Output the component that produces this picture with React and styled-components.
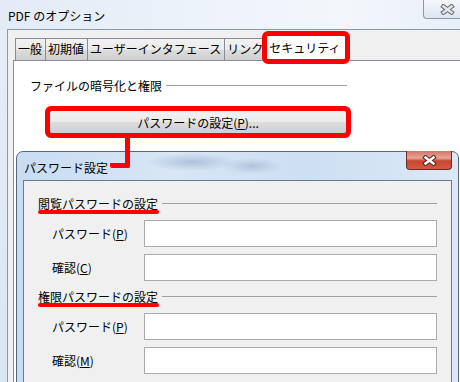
import React from 'react'
import styled, { createGlobalStyle } from 'styled-components'

const GlobalStyle = createGlobalStyle`
  html, body {
    margin: 0;
    padding: 0;
  }
  body {
    font-family: "Noto Sans CJK JP", "Noto Sans", sans-serif;
    font-size: 12px;
    color: #000;
  }
  * {
    box-sizing: border-box;
  }
`;

function CloseGlyph({ fill, edge }) {
    return (
        <svg width="15" height="11" viewBox="0 0 15 11">
            <path d="M3.5 2.5 L11.5 8.5 M11.5 2.5 L3.5 8.5" stroke={edge} strokeWidth="4.6" strokeLinecap="square" fill="none" />
            <path d="M3.5 2.5 L11.5 8.5 M11.5 2.5 L3.5 8.5" stroke={fill} strokeWidth="2.4" strokeLinecap="square" fill="none" />
        </svg>
    )
}

function App() {
    return (
        <>
            <GlobalStyle />
            <Screen>
                <TitleBar>
                    <Caption>PDF のオプション</Caption>
                    <FrameClose>
                        <CloseGlyph fill="#e4e6ea" edge="#6b6f76" />
                    </FrameClose>
                </TitleBar>
                <Client>
                    <TabBar>
                        <Tab>一般</Tab>
                        <Tab>初期値</Tab>
                        <Tab>ユーザーインタフェース</Tab>
                        <Tab>リンク</Tab>
                        <Tab $active>セキュリティ</Tab>
                    </TabBar>
                    <TabPage>
                        <PageBody>
                            <GroupHeader>
                                <GroupTitle>ファイルの暗号化と権限</GroupTitle>
                                <Rule />
                            </GroupHeader>
                            <PushButton>パスワードの設定(<u>P</u>)...</PushButton>
                        </PageBody>
                    </TabPage>
                </Client>

                <Dialog>
                    <DialogTitleBar>
                        <DialogCaption>パスワード設定</DialogCaption>
                        <DialogClose>
                            <CloseGlyph fill="#ffffff" edge="#5a2a24" />
                        </DialogClose>
                    </DialogTitleBar>
                    <DialogClient>
                        <Form>
                            <GroupHeader $spaced>
                                <GroupTitle $marked>閲覧パスワードの設定</GroupTitle>
                                <Rule />
                            </GroupHeader>
                            <Field>
                                <FieldLabel>パスワード(<u>P</u>)</FieldLabel>
                                <TextBox />
                            </Field>
                            <Field>
                                <FieldLabel>確認(<u>C</u>)</FieldLabel>
                                <TextBox />
                            </Field>
                            <GroupHeader $spaced>
                                <GroupTitle $marked>権限パスワードの設定</GroupTitle>
                                <Rule />
                            </GroupHeader>
                            <Field>
                                <FieldLabel>パスワード(<u>P</u>)</FieldLabel>
                                <TextBox />
                            </Field>
                            <Field>
                                <FieldLabel>確認(<u>M</u>)</FieldLabel>
                                <TextBox />
                            </Field>
                        </Form>
                    </DialogClient>
                </Dialog>

                <Connector />
            </Screen>
        </>
    )
}

const Screen = styled.div`
    position: relative;
    width: 460px;
    height: 382px;
    overflow: hidden;
    display: flex;
    flex-direction: column;
    background: linear-gradient(180deg, #e6eef8 0%, #dbe6f3 100%);
`;

const TitleBar = styled.div`
    height: 29px;
    flex: none;
    display: flex;
    justify-content: space-between;
    padding-left: 8px;
    background: linear-gradient(90deg, #e2ebf6 0%, #edf3fa 45%, #f3f7fc 75%, #e7eff8 100%);
`;

const Caption = styled.div`
    align-self: center;
    font-size: 12px;
    line-height: 17px;
    padding-top: 1px;
`;

const FrameClose = styled.div`
    width: 48px;
    height: 19px;
    margin-right: -11px;
    display: flex;
    align-items: center;
    justify-content: center;
    border: 1px solid #8a98aa;
    border-top: none;
    border-radius: 0 0 4px 4px;
    background: linear-gradient(180deg, #f4f8fc 0%, #e8eef6 50%, #dde6f1 100%);
`;

const Client = styled.div`
    flex: 1;
    display: flex;
    flex-direction: column;
    margin-left: 7px;
    padding: 8px 0 0 5px;
    background: #f0f0f0;
    border-left: 1px solid #8c98a8;
    border-top: 1px solid #8c98a8;
`;

const TabBar = styled.div`
    height: 22px;
    flex: none;
    display: flex;
    align-items: flex-end;
    padding-left: 2px;
    position: relative;
    z-index: 1;
`;

const Tab = styled.div`
    position: relative;
    height: ${p => (p.$active ? '26px' : '22px')};
    margin: ${p => (p.$active ? '0 -2px -1px -2px' : '0 -1px 0 0')};
    padding: ${p => (p.$active ? '0 4px' : '0 3px 0 2px')};
    border: 1px solid #898c95;
    border-bottom: none;
    line-height: ${p => (p.$active ? '24px' : '20px')};
    white-space: nowrap;
    background: ${p => (p.$active
        ? '#ffffff'
        : 'linear-gradient(180deg, #f2f2f2 0%, #ebebeb 50%, #dddddd 50%, #cfcfcf 100%)')};
    z-index: ${p => (p.$active ? 2 : 0)};

    ${p => p.$active && `
        &::after {
            content: '';
            position: absolute;
            left: -3px;
            right: -5px;
            top: -5px;
            bottom: -3px;
            border: 5px solid #ff0000;
            border-radius: 6px;
        }
    `}
`;

const TabPage = styled.div`
    flex: 1;
    background: #ffffff;
    border: 1px solid #898c95;
    border-right: none;
    border-bottom: none;
`;

const PageBody = styled.div`
    width: 333px;
    padding: 16px 0 0 16px;
    display: flex;
    flex-direction: column;
`;

const GroupHeader = styled.div`
    height: 17px;
    display: flex;
    align-items: center;
    gap: 4px;
    margin-bottom: ${p => (p.$spaced ? '1px' : '0')};
`;

const GroupTitle = styled.span`
    position: relative;
    line-height: 17px;
    white-space: nowrap;

    ${p => p.$marked && `
        &::after {
            content: '';
            position: absolute;
            left: 0;
            right: -1px;
            bottom: -2px;
            height: 4px;
            border-radius: 2px;
            background: #ff0000;
        }
    `}
`;

const Rule = styled.div`
    flex: 1;
    height: 1px;
    background: #a0a0a0;
`;

const PushButton = styled.div`
    position: relative;
    width: 298px;
    height: 24px;
    margin: 16px 0 0 19px;
    display: flex;
    align-items: center;
    justify-content: center;
    border: 1px solid #707070;
    border-radius: 3px;
    background: linear-gradient(180deg, #f2f2f2 0%, #ebebeb 50%, #dddddd 50%, #cfcfcf 100%);

    &::after {
        content: '';
        position: absolute;
        left: -5px;
        right: -5px;
        top: -5px;
        bottom: -5px;
        border: 5px solid #ff0000;
        border-radius: 6px;
    }
`;

const Dialog = styled.div`
    position: absolute;
    left: 16px;
    top: 151px;
    width: 443px;
    height: 250px;
    display: flex;
    flex-direction: column;
    padding: 0 6px;
    border: 1px solid #56677d;
    border-radius: 7px 7px 0 0;
    background:
        radial-gradient(ellipse 45px 9px at 175px 10px, rgba(96, 128, 168, 0.35), transparent),
        radial-gradient(ellipse 30px 8px at 235px 14px, rgba(96, 128, 168, 0.3), transparent),
        linear-gradient(90deg, #c9dcf1 0%, #d8e6f5 35%, #cddff2 65%, #dbe8f6 100%);
    z-index: 3;
`;

const DialogTitleBar = styled.div`
    height: 28px;
    flex: none;
    display: flex;
    justify-content: space-between;
`;

const DialogCaption = styled.div`
    align-self: center;
    padding-left: 1px;
    line-height: 17px;
    padding-top: 2px;
`;

const DialogClose = styled.div`
    width: 46px;
    height: 19px;
    margin-top: -1px;
    display: flex;
    align-items: center;
    justify-content: center;
    border: 1px solid #6b2b24;
    border-top: none;
    border-radius: 0 0 4px 4px;
    background: linear-gradient(180deg, #d57666 0%, #e8a396 40%, #c8452f 55%, #cf5c45 100%);
`;

const DialogClient = styled.div`
    flex: 1;
    background: #f0f0f0;
    border: 1px solid #6c7a8c;
    border-bottom: none;
    padding: 14px 14px 0 14px;
`;

const Form = styled.div`
    display: flex;
    flex-direction: column;
    gap: 7px;
`;

const Field = styled.div`
    display: flex;
    align-items: center;
    padding-left: 14px;
`;

const FieldLabel = styled.div`
    width: 92px;
    flex: none;
    white-space: nowrap;
`;

const TextBox = styled.div`
    width: 293px;
    height: 27px;
    background: #ffffff;
    border: 1px solid #a9abb0;
`;

const Connector = styled.div`
    position: absolute;
    left: 110px;
    top: 137px;
    width: 20px;
    height: 31px;
    border-right: 5px solid #ff0000;
    border-bottom: 5px solid #ff0000;
    border-radius: 0 0 2px 2px;
    z-index: 4;
`;

export default App
